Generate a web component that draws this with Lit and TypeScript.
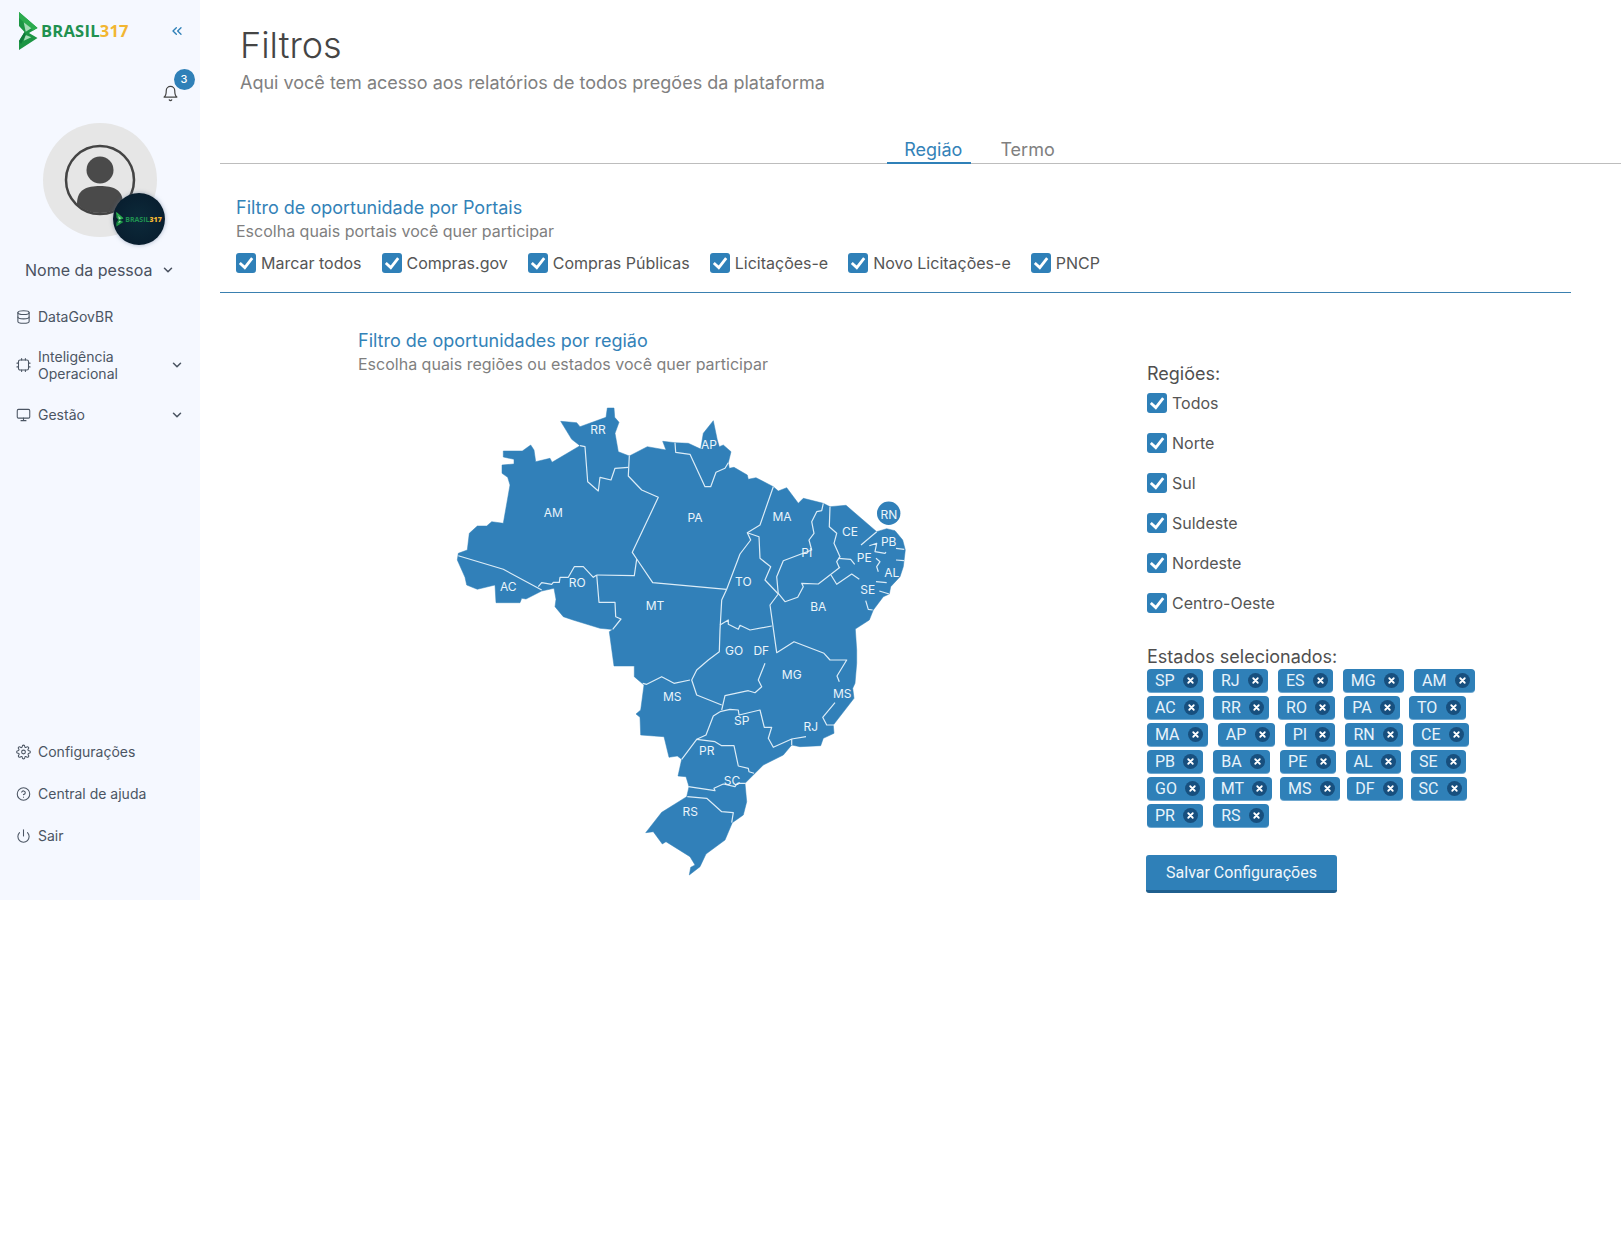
import { LitElement, html, css, svg } from "lit";
import { customElement } from "lit/decorators.js";

const OUTLINE = "458.3,553.3 467.3,550 469.3,533.3 477.3,526 486.7,526 491.7,521.7 503.3,523.3 510,485 507.7,477.3 502,473.3 502,465 514,464 514,459.3 503.3,457 503.3,451 522.3,451 530.7,445 534,450 535.7,461.7 550,458.3 552,462.3 580,445.7 571.7,439.3 560.7,421.3 576.7,422.7 580,426.7 606,417.3 607.3,408 614,408 614.7,417.3 619,422.3 615,433.3 618.3,451.7 629.3,456 647.3,446.7 666,450 662.7,441.3 675,442.7 688.3,443.3 700.7,449 703.3,433.3 713.3,420.7 717.3,440 719.3,446.7 723.3,445 731,451.7 728.3,462.7 729.3,468.3 734,467.3 747.3,475 748.3,479.3 756,477.7 773.3,486.7 778.3,491 786.7,487.7 798.3,503.3 803.3,498.3 823.3,503.3 830,506.7 846,505.3 876.7,531.7 886.7,528.7 895,530.7 902.7,540 905.3,550 903.3,566.7 900,576.7 890.7,586.7 889.3,594 883.3,596.7 873.3,610 869.3,620 855.3,629 856.7,650 856.7,663.3 855,683.3 852.7,688.3 854,698.3 833.3,725 834,733.3 823.3,738.3 820.7,745.7 800,746.7 791.7,745 783.3,755 763.3,765 745,783.3 746.7,801.7 743.3,815 732.3,822.7 725,840 706,854 700,866.7 689.3,875 690.7,867.3 695,865 690,856.7 666,841.7 662.3,844 653.3,831.7 645.7,832.7 661.7,812.3 686.7,796.7 689,786.7 686,776.7 678,776 681.7,759.3 677.3,756 669,757.3 664,736.7 640.7,735 640,717.3 636,714 640.7,710 644,685 634.3,676.7 634.3,666 614,666 609.3,631.7 612.7,629.5 600,628.3 573,620 563.3,616.7 555,606.7 556,599.3 554,588.3 541.7,591 526,599 521.7,598.3 520,602.7 496,602.7 495,585 477.3,589.3 466.7,585 465,577.3 457.3,560";

const BORDERS = [
  "458.3,555.7 503.3,569.3 541.7,590",
  "538.3,586.7 541.7,582.7 551.7,584.3 553.3,582.3 559.3,582.3 560,577.3 568.3,577.3 574.3,566.7 583.3,566.7 593.3,577.3 596.7,575",
  "596.7,575 634.3,575.7 636.7,559",
  "636.7,559 632.3,552.3 658.3,497.3 641.7,490 628.3,476 629.3,456",
  "628.3,467.3 615,468.3 611,480 600,477.3 598.3,491 587.7,481.7 585,446.7 580,445.7",
  "596.7,575 599,602.3 615,602.3 615.7,616.7 621,619 612.7,629.3",
  "636.7,559 652.7,582.7 726.7,589.3",
  "675,442.7 675.7,452.3 690,454.3 705,486.7 710.7,486.7 716,472.3 725,468.3 728.3,462.7",
  "773.3,486.7 760,525 747.3,532.7 750.7,540 740,554 726.7,589.3 721.7,600 720,630 719.3,651.7 708.3,660 696.7,670 691.7,680 696.7,695 721.7,705",
  "690,680 674,683.3 661.7,676.7 646.7,684.3 642.7,683.3",
  "720,711.7 713.3,716 706,735 696.7,739.3 681.7,759.3",
  "765,663.3 758.3,680 761.7,686.7 755,692.7 748.3,690.7 725,695.7 721.7,710",
  "720,711.7 730,709.3 738.3,710 739,715 760,710 764.3,727.3 771.7,727.3 768.3,738.3 773.3,747.3 791.7,739 806,736.7",
  "791.7,739 791.7,745",
  "834,725 826.7,725 822.7,717.3 835,702.7",
  "839.3,681.7 837,676 846.7,660 830,660 824,653.3 794,641.7 776.7,652.7 770,605 778.3,594 765,580 770.7,566.7 760,558.3 759,536.7 747.3,532.7",
  "720,625 728.3,620 728.3,624.3 738.3,629.3 740,625.3 750,630 771.7,626",
  "823.3,503.3 821.7,510.7 816.7,511.7 811.7,521.7 814,533.3 809,540 811.7,550 783.3,560.7 776.7,576.7 778.3,594",
  "778.3,593.3 785,601.7 797.7,597.3 803.3,586.7 801.7,583.3 818.3,584 840,567.3",
  "830,506.7 829.3,526.7 836.7,533.3 834,543.3 840,556.7 836.7,561.7 839.3,567.7",
  "838.3,558.3 850.7,559.3 854.7,564.3",
  "831,575 836.7,584.3 851.7,574 859.3,579.3",
  "865.7,600.7 868.3,609.3 872.7,610",
  "861,545 876.7,531.7",
  "869.3,545.7 876.7,543.3 875,551.7 885,553.3 886,552",
  "896,548.3 904.3,549.3",
  "896,560 904,560.7",
  "876,558.3 880,561.7 876.7,566.7 878.3,571.7",
  "876,581.7 886.7,582.7",
  "879.3,591 889.3,594",
  "696.7,739.3 715,741.7 721.7,745.7 734,745.7 738.3,766 748.3,768.3 749,771.7 754,773.3",
  "688.3,786.7 715,790.7 714,788.3 723.3,784 735,786.7 737.3,783.3 745.7,783.3",
  "687.3,796.7 706.7,798.3 721.7,811.7 733.3,812.7 731.7,822.7",
];

const LABELS: [string, number, number][] = [
  ["AM", 553.3, 512.7], ["RR", 598, 429.3], ["AC", 508.3, 586.7], ["RO", 577.3, 582.3], ["MT", 655, 605],
  ["AP", 709, 444.3], ["PA", 695, 517.3], ["MA", 782, 516.7], ["PI", 806.7, 552.7], ["TO", 743.3, 581.3],
  ["BA", 818.3, 606.7], ["CE", 850, 531.7], ["PE", 864.3, 557.3], ["PB", 888.7, 541.7], ["AL", 891.7, 572.3],
  ["SE", 867.7, 589.3], ["RN", 889, 514], ["GO", 734, 650.7], ["DF", 761.3, 650.7], ["MG", 791.7, 674.3],
  ["MS", 842.3, 693.3], ["MS", 672.3, 696.7], ["SP", 741.7, 720], ["RJ", 810.7, 726], ["PR", 706.7, 750],
  ["SC", 732, 780.7], ["RS", 690.3, 811.7],
];

const PORTALS = ["Marcar todos", "Compras.gov", "Compras Públicas", "Licitações-e", "Novo Licitações-e", "PNCP"];
const REGIONS = ["Todos", "Norte", "Sul", "Suldeste", "Nordeste", "Centro-Oeste"];
const STATE_ROWS: { cls: string; items: string[] }[] = [
  { cls: "", items: ["SP", "RJ", "ES", "MG", "AM"] },
  { cls: "g9", items: ["AC", "RR", "RO", "PA", "TO"] },
  { cls: "", items: ["MA", "AP", "PI", "RN", "CE"] },
  { cls: "", items: ["PB", "BA", "PE", "AL", "SE"] },
  { cls: "g7", items: ["GO", "MT", "MS", "DF", "SC"] },
  { cls: "", items: ["PR", "RS"] },
];

const chevronDown = html`<svg class="chev" viewBox="0 0 24 24" width="14" height="14" fill="none" stroke="currentColor" stroke-width="2.6" stroke-linecap="round" stroke-linejoin="round"><path d="M6 9l6 6 6-6"/></svg>`;

const ic = (body: unknown) => html`<svg class="ic" viewBox="0 0 24 24" width="16" height="16" fill="none" stroke="currentColor" stroke-width="1.7" stroke-linecap="round" stroke-linejoin="round">${body}</svg>`;

const ICONS = {
  db: svg`<ellipse cx="12" cy="5" rx="9" ry="3"/><path d="M3 5v14c0 1.7 4 3 9 3s9-1.3 9-3V5"/><path d="M3 12c0 1.7 4 3 9 3s9-1.3 9-3"/>`,
  chip: svg`<rect x="4" y="4" width="16" height="16" rx="2.5"/><path d="M9 1.5V4M15 1.5V4M9 20v2.5M15 20v2.5M1.5 9H4M1.5 15H4M20 9h2.5M20 15h2.5"/>`,
  monitor: svg`<rect x="2" y="3" width="20" height="14" rx="2"/><path d="M8 21h8M12 17v4"/>`,
  gear: svg`<circle cx="12" cy="12" r="3"/><path d="M19.4 15a1.65 1.65 0 0 0 .33 1.82l.06.06a2 2 0 1 1-2.83 2.83l-.06-.06a1.65 1.65 0 0 0-2.82 1.17V21a2 2 0 1 1-4 0v-.09a1.65 1.65 0 0 0-2.82-1.17l-.06.06a2 2 0 1 1-2.83-2.83l.06-.06A1.65 1.65 0 0 0 3.09 14H3a2 2 0 1 1 0-4h.09a1.65 1.65 0 0 0 1.17-2.82l-.06-.06a2 2 0 1 1 2.83-2.83l.06.06A1.65 1.65 0 0 0 10 3.09V3a2 2 0 1 1 4 0v.09a1.65 1.65 0 0 0 2.82 1.17l.06-.06a2 2 0 1 1 2.83 2.83l-.06.06A1.65 1.65 0 0 0 20.91 10H21a2 2 0 1 1 0 4h-.09a1.65 1.65 0 0 0-1.51 1z"/>`,
  help: svg`<circle cx="12" cy="12" r="10"/><path d="M9.1 9a3 3 0 0 1 5.8 1c0 2-3 3-3 3"/><path d="M12 17h.01"/>`,
  power: svg`<path d="M12 2v10"/><path d="M18.4 6.6a9 9 0 1 1-12.8 0"/>`,
};

const check = html`<span class="box"><svg viewBox="0 0 20 20" width="20" height="20" fill="none" stroke="#fff" stroke-width="2.8" stroke-linejoin="miter"><path d="M3.8 10l5 4.6 7.4-9.4"/></svg></span>`;

const logoMark = svg`
  <polygon points="1,0 19.5,16 11,21 19.5,26 1,38 1,29 6.5,20 1,14" fill="#1c9544"/>
  <polygon points="1,0 19.5,16 15,18.6 1,6" fill="#2bab4e"/>
  <polygon points="5.7,10.3 13.3,16.3 7.7,19.7" fill="#a5dcb6"/>
  <polygon points="5.7,28.7 7.7,23 13.3,25.3" fill="#a5dcb6"/>
  <polygon points="1,29 6.5,20 7.7,23 3,32" fill="#0f7a3a"/>`;

@customElement("app-root")
export class AppRoot extends LitElement {
  static styles = css`
    :host { display: block; font-family: Inter, "Liberation Sans", sans-serif; color: #4a4a4a; background: #fff; min-height: 1248px; }
    .app { display: flex; align-items: flex-start; }
    .side { width: 200px; height: 900px; flex: none; background: #f5f8ff; display: flex; flex-direction: column; color: #4b5563; font-size: 14px; }
    .brand { display: flex; align-items: center; padding: 12px 15px 0 18px; height: 38px; }
    .mark { display: block; flex: none; }
    .wordmark { font: 700 16.5px/1 "Open Sans", sans-serif; margin-left: 2px; color: #1f9150; letter-spacing: .25px; }
    .wordmark b { color: #f2b632; font-weight: 700; }
    .collapse { margin-left: auto; color: #2f80b8; display: flex; }
    .bell-row { display: flex; justify-content: flex-end; padding: 18.5px 5.5px 0 0; height: 52px; box-sizing: border-box; }
    .bell-wrap { position: relative; width: 33px; height: 33.5px; color: #444; display: flex; align-items: flex-end; }
    .badge { position: absolute; right: 0; top: 0; width: 21px; height: 21px; border-radius: 50%; background: #2f80b8; color: #fff; font-size: 11px; font-weight: 500; display: flex; align-items: center; justify-content: center; }
    .avatar { position: relative; width: 114px; height: 114px; border-radius: 50%; background: #e6e6e6; margin: 21px auto 0 43px; }
    .avatar > svg { display: block; }
    .org { position: absolute; left: 70px; top: 70px; width: 52px; height: 52px; border-radius: 50%; background: radial-gradient(circle, #0c2a3a 0%, #071a2b 100%); box-shadow: 0 0 4px rgba(90,110,140,.5); display: flex; align-items: center; justify-content: center; gap: 1px; overflow: hidden; }
    .org span { font: 700 7px/1 "Open Sans", sans-serif; color: #1f9150; white-space: nowrap; }
    .org b { color: #f2b632; }
    .name { display: flex; align-items: center; margin-top: 23px; padding-left: 25px; font-size: 16px; line-height: 20px; color: #4a5160; gap: 8px; }
    .menu { display: flex; flex-direction: column; margin-top: 16px; }
    .item { display: flex; align-items: center; padding: 0 16px; min-height: 42px; line-height: 17.5px; box-sizing: border-box; }
    .item .ic { margin-right: 7px; flex: none; width: 15px; }
    .item .chev { margin-left: auto; flex: none; }
    .tall { min-height: 56px; padding-bottom: 2px; }
    .spacer { flex: 1; }
    .bottom { padding-bottom: 43px; }
    .main { flex: 1; min-width: 0; }
    .head { padding: 23px 0 0 20px; margin-left: 20px; }
    h1 { margin: 0; font-size: 36px; font-weight: 300; line-height: 44px; color: #454545; }
    .lead { margin: 3px 0 0; font-size: 18px; line-height: 26px; color: #808080; font-weight: 400; }
    .tabs { margin: 42px 0 0 20px; border-bottom: 1px solid #bdbdbd; display: flex; justify-content: center; gap: 21px; height: 26px; box-sizing: border-box; padding-left: 109px; }
    .tab { font-size: 18px; line-height: 24px; padding: 0 8px; height: 26px; box-sizing: border-box; color: #808080; }
    .tab.on { color: #3382b8; padding: 0 9px 0 17px; border-bottom: 2px solid #2f80b8; }
    .portais { margin: 0 50px 0 20px; padding: 32px 0 19.5px 16px; border-bottom: 1px solid #3a80b0; }
    h2 { margin: 0; font-size: 18px; line-height: 24px; font-weight: 400; color: #3382b8; }
    .hint { margin: 0; font-size: 16px; line-height: 22px; color: #7f7f7f; }
    .checks { display: flex; gap: 20px; margin-top: 10.5px; }
    .check { display: flex; align-items: center; gap: 5px; font-size: 16px; line-height: 20px; color: #555; }
    .box { width: 20px; height: 20px; border-radius: 3px; background: #2f80b8; display: block; flex: none; }
    .box svg { display: block; }
    .body { display: flex; margin-left: 158px; padding-top: 36px; }
    .left { width: 789px; flex: none; }
    .map { display: block; margin: 15px 0 0 82px; }
    .map text { font: 400 12px Inter, sans-serif; fill: #eaf4fb; text-anchor: middle; dominant-baseline: central; }
    .right { padding-top: 33px; width: 360px; }
    .rt { font-size: 18px; line-height: 24px; color: #4f4f4f; }
    .regions { display: flex; flex-direction: column; gap: 20px; margin-top: 7px; }
    .est { margin: 32px 0 0; }
    .chips { display: flex; flex-direction: column; gap: 4px; }
    .row { display: flex; gap: 10px; }
    .row.g9 { gap: 9px; }
    .row.g7 { gap: 7.6px; }
    .chip { height: 23px; border-radius: 4px; background: #2f80b8; color: #e8f3fb; font: 400 16px/23px Roboto, sans-serif; padding: 0 5px 0 8px; display: flex; align-items: center; gap: 8.3px; box-shadow: 0 1px 0 #6fa8d0; }
    .x { width: 15px; height: 15px; border-radius: 50%; background: #174f7e; display: flex; align-items: center; justify-content: center; }
    .x svg { display: block; }
    .save { display: block; margin: 28px 0 0 -1px; width: 191px; height: 38px; border: 0; border-bottom: 3px solid #1f5f8e; border-radius: 3px; background: #2f80b8; color: #f1f7fb; font: 400 16px Roboto, sans-serif; padding: 0; }
  `;

  render() {
    return html`<div class="app">
      <aside class="side">
        <div class="brand">
          <svg class="mark" viewBox="0 0 21 39" width="21" height="39">${logoMark}</svg>
          <span class="wordmark">BRASIL<b>317</b></span>
          <span class="collapse"><svg viewBox="0 0 24 24" width="16" height="16" fill="none" stroke="currentColor" stroke-width="2" stroke-linecap="round" stroke-linejoin="round"><path d="M11 17l-5-5 5-5M18 17l-5-5 5-5"/></svg></span>
        </div>
        <div class="bell-row">
          <div class="bell-wrap">
            <svg viewBox="0 0 24 24" width="17" height="17" fill="none" stroke="currentColor" stroke-width="1.7" stroke-linecap="round" stroke-linejoin="round"><path d="M18 8a6 6 0 0 0-12 0c0 7-3 9-3 9h18s-3-2-3-9"/><path d="M13.7 21a2 2 0 0 1-3.4 0"/></svg>
            <span class="badge">3</span>
          </div>
        </div>
        <div class="avatar">
          <svg viewBox="0 0 114 114" width="114" height="114">
            <circle cx="57" cy="57" r="34" fill="none" stroke="#444" stroke-width="2.5"/>
            <circle cx="57" cy="47" r="13.5" fill="#4a4a4a"/>
            <path d="M34 81c0-15 10-18 23-18s23 3 23 18c-6 6-14 9-23 9s-17-3-23-9z" fill="#4a4a4a"/>
          </svg>
          <div class="org">
            <svg viewBox="0 0 21 39" width="8" height="15">${logoMark}</svg>
            <span>BRASIL<b>317</b></span>
          </div>
        </div>
        <div class="name">Nome da pessoa ${chevronDown}</div>
        <nav class="menu">
          <div class="item">${ic(ICONS.db)}DataGovBR</div>
          <div class="item tall">${ic(ICONS.chip)}<span>Inteligência<br />Operacional</span>${chevronDown}</div>
          <div class="item">${ic(ICONS.monitor)}Gestão${chevronDown}</div>
        </nav>
        <div class="spacer"></div>
        <nav class="menu bottom">
          <div class="item">${ic(ICONS.gear)}Configurações</div>
          <div class="item">${ic(ICONS.help)}Central de ajuda</div>
          <div class="item">${ic(ICONS.power)}Sair</div>
        </nav>
      </aside>
      <main class="main">
        <header class="head">
          <h1>Filtros</h1>
          <p class="lead">Aqui você tem acesso aos relatórios de todos pregões da plataforma</p>
        </header>
        <div class="tabs"><div class="tab on">Região</div><div class="tab">Termo</div></div>
        <section class="portais">
          <h2>Filtro de oportunidade por Portais</h2>
          <p class="hint">Escolha quais portais você quer participar</p>
          <div class="checks">${PORTALS.map((p) => html`<label class="check">${check}${p}</label>`)}</div>
        </section>
        <section class="body">
          <div class="left">
            <h2>Filtro de oportunidades por região</h2>
            <p class="hint">Escolha quais regiões ou estados você quer participar</p>
            <svg class="map" viewBox="440 390 480 500" width="480" height="500">
              <polygon points=${OUTLINE} fill="#3180b9" stroke="#3180b9" stroke-width=".5"/>
              <g fill="none" stroke="#dcecf7" stroke-width="1.2" stroke-linejoin="round">
                ${BORDERS.map((b) => svg`<polyline points=${b}/>`)}
              </g>
              <circle cx="888.7" cy="513.3" r="11.7" fill="#3180b9"/>
              ${LABELS.map(([t, x, y]) => svg`<text x=${x} y=${y}>${t}</text>`)}
            </svg>
          </div>
          <div class="right">
            <div class="rt">Regiões:</div>
            <div class="regions">${REGIONS.map((r) => html`<label class="check">${check}${r}</label>`)}</div>
            <div class="rt est">Estados selecionados:</div>
            <div class="chips">${STATE_ROWS.map((r) => html`<div class="row ${r.cls}">${r.items.map((s) => html`<span class="chip">${s}<span class="x"><svg viewBox="0 0 10 10" width="9" height="9" fill="none" stroke="#fff" stroke-width="2" stroke-linecap="round"><path d="M2.5 2.5l5 5M7.5 2.5l-5 5"/></svg></span></span>`)}</div>`)}</div>
            <button class="save">Salvar Configurações</button>
          </div>
        </section>
      </main>
    </div>`;
  }
}
